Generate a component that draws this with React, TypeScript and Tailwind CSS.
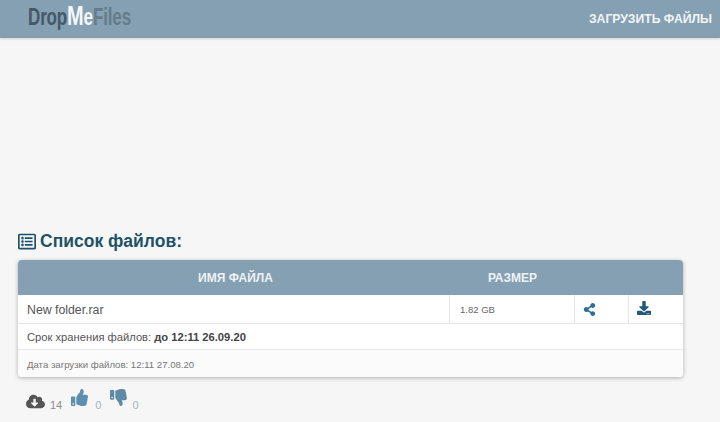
import { FaCloudDownloadAlt, FaDownload, FaRegListAlt, FaShareAlt, FaThumbsDown, FaThumbsUp } from "react-icons/fa";

export default function App() {
  return (
    <div className="h-[422px] w-[720px] overflow-hidden bg-[#f6f6f6] font-['Liberation_Sans',Arial,sans-serif] text-[#555]">
      {/* Header */}
      <header className="flex h-[38px] items-center justify-between bg-[#84a0b2] pl-7 pr-2 shadow-[0_1px_2px_rgba(0,0,0,0.15)]">
        <div className="mb-[5px] flex w-[102px] origin-left scale-x-[0.74] items-baseline whitespace-nowrap text-[23px] font-bold leading-none tracking-[-0.2px]">
          <span className="text-[#44586a]">Drop</span>
          <span className="text-[27px] text-[#f4f7f8]">M</span>
          <span className="text-[#f4f7f8]">e</span>
          <span className="text-[#667c8b]">Files</span>
        </div>
        <a className="text-[12.2px] font-bold uppercase text-[#f2f5f7]">Загрузить файлы</a>
      </header>

      <main className="pl-[18px] pr-[37px] pt-[193px]">
        {/* Title */}
        <h2 className="flex h-5 items-center gap-[4px] text-[17.5px] font-bold leading-5 text-[#1f5266]">
          <FaRegListAlt className="h-[19px] w-[18px] text-[#1f5266]" />
          <span>Список файлов:</span>
        </h2>

        {/* File table */}
        <section className="mt-[9px] overflow-hidden rounded-[4px] bg-white shadow-[0_1px_4px_rgba(0,0,0,0.3)]">
          <div className="flex h-[35px] items-center bg-[#84a0b2] text-[12px] font-bold uppercase text-[#eef2f5]">
            <div className="w-[432px] pl-[3px] text-center">Имя файла</div>
            <div className="w-[125px] text-center">Размер</div>
          </div>
          <div className="flex h-[29px] items-center border-b border-[#e6e6e6]">
            <div className="flex h-full w-[432px] items-center border-r border-[#e6e6e6] pl-[9px] pt-[2px] text-[12.3px]">New folder.rar</div>
            <div className="flex h-full w-[125px] items-center border-r border-[#e6e6e6] pl-[10px] pt-[2px] text-[9.5px] text-[#666]">1.82 GB</div>
            <div className="flex h-full w-[54px] items-center border-r border-[#e6e6e6] pl-[8px]">
              <FaShareAlt className="h-[13px] w-[13px] text-[#2f6f94]" />
            </div>
            <div className="flex h-full flex-1 items-center pl-[8px]">
              <FaDownload className="mb-[2px] h-[14px] w-[14px] text-[#20597c]" />
            </div>
          </div>
          <div className="flex h-[26px] items-center border-b border-[#e9e9e9] pl-[9px] pt-[1px] text-[11.2px]">
            <span>Срок хранения файлов:</span>
            <b className="ml-[3px] text-[#444]">до 12:11 26.09.20</b>
          </div>
          <div className="flex h-[27px] items-center bg-[#fbfbfb] pl-[9px] pt-[4px] text-[9.6px] text-[#777]">Дата загрузки файлов: 12:11 27.08.20</div>
        </section>

        {/* Stats */}
        <div className="ml-2 mt-[12px] flex items-start text-[11px] text-[#8c8c8c]">
          <FaCloudDownloadAlt className="mt-[3px] h-[19px] w-[19px] text-[#555]" />
          <span className="ml-[5px] mt-[10px] leading-3">14</span>
          <FaThumbsUp className="ml-[9px] h-[17px] w-[17px] text-[#5c8fb0]" />
          <span className="ml-[7px] mt-[10px] leading-3 text-[#a9b3bb]">0</span>
          <FaThumbsDown className="ml-[9px] h-[17px] w-[17px] text-[#5f8aa6]" />
          <span className="ml-[5px] mt-[10px] leading-3 text-[#a9b3bb]">0</span>
        </div>
      </main>
    </div>
  );
}
